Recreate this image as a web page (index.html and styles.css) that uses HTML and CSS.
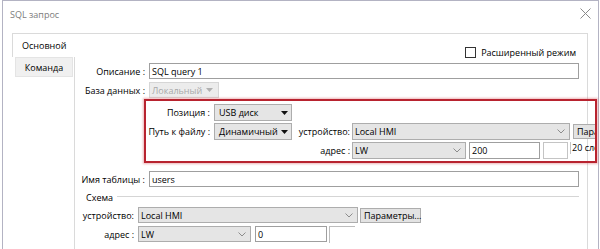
FILE: index.html
```html
<!DOCTYPE html>
<html lang="ru">
<head>
<meta charset="utf-8">
<title>SQL запрос</title>
<link rel="stylesheet" href="styles.css">
</head>
<body>
<div class="window">
  <div class="titlebar">
    <span class="title">SQL запрос</span>
    <svg class="close" width="11" height="11" viewBox="0 0 11 11"><path d="M0.5 0.5 L10.5 10.5 M10.5 0.5 L0.5 10.5" stroke="#8a8a8a" stroke-width="1" fill="none"/></svg>
  </div>
  <div class="frame">
    <div class="tabcol">
      <div class="tab-active">Основной</div>
      <div class="tab-rest"><div class="tab">Команда</div></div>
    </div>
    <div class="content">
      <div class="opt-row"><span class="checkbox"></span><span>Расширенный режим</span></div>

      <div class="row r-desc">
        <span class="lbl">Описание :</span>
        <div class="input grow">SQL query 1</div>
      </div>

      <div class="row r-db">
        <span class="lbl">База данных :</span>
        <div class="select disabled w-db">Локальный<svg class="tri" width="7" height="4" viewBox="0 0 7 4"><polygon points="0,0 7,0 3.5,4" fill="#b0b0b0"/></svg></div>
      </div>

      <div class="highlight">
        <div class="hrow">
          <span class="lbl2">Позиция :</span>
          <div class="select pad4 w-pos">USB диск<svg class="tri" width="7" height="4" viewBox="0 0 7 4"><polygon points="0,0 7,0 3.5,4" fill="#111"/></svg></div>
        </div>
        <div class="hrow">
          <span class="lbl2">Путь к файлу :</span>
          <div class="select pad4 w-pos">Динамичный<svg class="tri" width="7" height="4" viewBox="0 0 7 4"><polygon points="0,0 7,0 3.5,4" fill="#111"/></svg></div>
          <span class="lbl3">устройство:</span>
          <div class="select w-dev">Local HMI<svg class="chev" width="8" height="5" viewBox="0 0 8 5"><polyline points="0.5,0.5 4,4 7.5,0.5" stroke="#8c8c8c" fill="none"/></svg></div>
          <div class="button w-btn">Параметры...</div>
        </div>
        <div class="hrow">
          <span class="spacer"></span>
          <span class="lbl3">адрес :</span>
          <div class="select w-addr">LW<svg class="chev" width="8" height="5" viewBox="0 0 8 5"><polyline points="0.5,0.5 4,4 7.5,0.5" stroke="#8c8c8c" fill="none"/></svg></div>
          <div class="input w-num">200</div>
          <div class="input faint w-small"></div>
          <span class="words">20 слов</span>
        </div>
      </div>

      <div class="row r-table">
        <span class="lbl">Имя таблицы :</span>
        <div class="input grow">users</div>
      </div>

      <div class="group-title"><span>Схема</span><span class="group-line"></span></div>

      <div class="row r-dev">
        <span class="lbl lbl-s">устройство:</span>
        <div class="select w-dev2">Local HMI<svg class="chev" width="8" height="5" viewBox="0 0 8 5"><polyline points="0.5,0.5 4,4 7.5,0.5" stroke="#8c8c8c" fill="none"/></svg></div>
        <div class="button w-btn2">Параметры...</div>
      </div>

      <div class="row r-addr">
        <span class="lbl lbl-s">адрес :</span>
        <div class="select w-addr2">LW<svg class="chev" width="8" height="5" viewBox="0 0 8 5"><polyline points="0.5,0.5 4,4 7.5,0.5" stroke="#8c8c8c" fill="none"/></svg></div>
        <div class="input w-num2">0</div>
        <div class="input partial w-small2"></div>
      </div>
    </div>
  </div>
</div>
</body>
</html>
```
FILE: styles.css
```css
* { box-sizing: border-box; }
html, body { margin: 0; height: 100%; }
body {
  background: #fff;
  font-family: "Open Sans", "Noto Sans", sans-serif;
  font-size: 9px;
  color: #000;
  overflow: hidden;
}
.window {
  margin: 0 1px 0 2px;
  height: 249px;
  border: 1px solid #b3b3c3;
  border-bottom: none;
  display: flex;
  flex-direction: column;
  background: #fff;
}
.titlebar {
  height: 32px;
  flex: none;
  display: flex;
  align-items: center;
  justify-content: space-between;
  padding: 0 7px 6px 7px;
}
.title { color: #7c7c7c; font-size: 9px; }
.close { display: block; margin-top: -2px; }

.frame {
  flex: 1;
  margin: 0 10px 0 9px;
  border-top: 1px solid #dadada;
  border-right: 1px solid #dadada;
  display: flex;
}
.tabcol { width: 63px; display: flex; flex-direction: column; flex: none; }
.tab-active {
  height: 23px;
  border-left: 1px solid #dadada;
  padding-left: 9px;
  display: flex;
  align-items: center;
}
.tab-rest { flex: 1; border-right: 1px solid #dadada; }
.tab {
  margin-left: 3px;
  width: 58px;
  height: 20px;
  background: #f0f0f0;
  border: 1px solid #e4e4e4;
  display: flex;
  align-items: center;
  justify-content: center;
}

.content {
  flex: 1;
  padding: 12px 8px 0 0;
  display: flex;
  flex-direction: column;
  min-width: 0;
}
.opt-row {
  height: 12px;
  display: flex;
  justify-content: flex-end;
  align-items: center;
  gap: 5px;
  padding-right: 3px;
}
.checkbox {
  width: 11px;
  height: 11px;
  border: 1px solid #333;
  background: #fff;
}

.row { display: flex; align-items: center; height: 16px; flex: none; }
.r-desc { margin-top: 5px; }
.r-db { margin-top: 3px; }
.r-table { margin-top: 8px; }
.r-dev { margin-top: 4px; }
.r-addr { margin-top: 3px; }

.lbl { width: 70px; text-align: right; margin-right: 4px; flex: none; white-space: nowrap; }
.lbl-s { width: 59px; }

.input {
  height: 16px;
  border: 1px solid #9f9f9f;
  background: #fff;
  padding-left: 2px;
  display: flex;
  align-items: center;
  flex: none;
}
.grow { flex: 1; }
.faint { border-color: #c4c4c4; }
.partial { border-color: #bdbdbd; border-right: none; border-bottom: none; }

.select {
  height: 100%;
  border: 1px solid #adadad;
  background: #e5e5e5;
  padding: 0 4px 0 2px;
  display: flex;
  align-items: center;
  justify-content: space-between;
  flex: none;
  white-space: nowrap;
}
.select.pad4 { padding: 0 3px 0 4px; }
.select.disabled { background: #ececec; color: #a8a8a8; border-color: #d6d6d6; padding-right: 5px; }
.tri, .chev { display: block; flex: none; }

.button {
  height: 15px;
  border: 1px solid #adadad;
  background: #e3e3e3;
  padding-left: 3px;
  display: flex;
  align-items: center;
  flex: none;
  white-space: nowrap;
}

.w-db { width: 70px; }
.w-pos { width: 78px; margin-left: 4px; }
.w-dev { width: 218px; }
.w-btn { width: 62px; margin-left: 3px; }
.w-addr { width: 114px; }
.w-num { width: 71px; height: 17px; margin-left: 3px; }
.w-small { width: 25px; height: 17px; margin-left: 3px; }
.w-dev2 { width: 220px; }
.w-btn2 { width: 61px; margin-left: 2px; }
.w-addr2 { width: 113px; }
.w-num2 { width: 72px; margin-left: 4px; }
.w-small2 { width: 26px; margin-left: 2px; height: 17px; }

.highlight {
  margin: 1px -18px 0 69px;
  border: 2px solid #b8232f;
  box-shadow: 0 0 2px 1px rgba(215, 90, 100, 0.45);
  padding: 3px 0 2px 0;
  display: flex;
  flex-direction: column;
  gap: 2px;
  overflow: hidden;
  flex: none;
}
.hrow { display: flex; align-items: center; height: 17px; }
.lbl2 { width: 64px; text-align: right; flex: none; white-space: nowrap; }
.lbl3 { width: 54px; text-align: right; margin: 0 2px 0 4px; flex: none; white-space: nowrap; }
.spacer { width: 146px; flex: none; }
.words { margin-left: 2px; align-self: flex-start; line-height: 12px; white-space: nowrap; border-left: 1px solid #c4c4c4; padding-left: 1px; }

.group-title {
  margin-top: 4px;
  height: 12px;
  padding-left: 11px;
  display: flex;
  align-items: center;
  flex: none;
}
.group-line { flex: 1; border-top: 1px solid #d5d5d5; margin-left: 4px; margin-top: -1px; }
```
